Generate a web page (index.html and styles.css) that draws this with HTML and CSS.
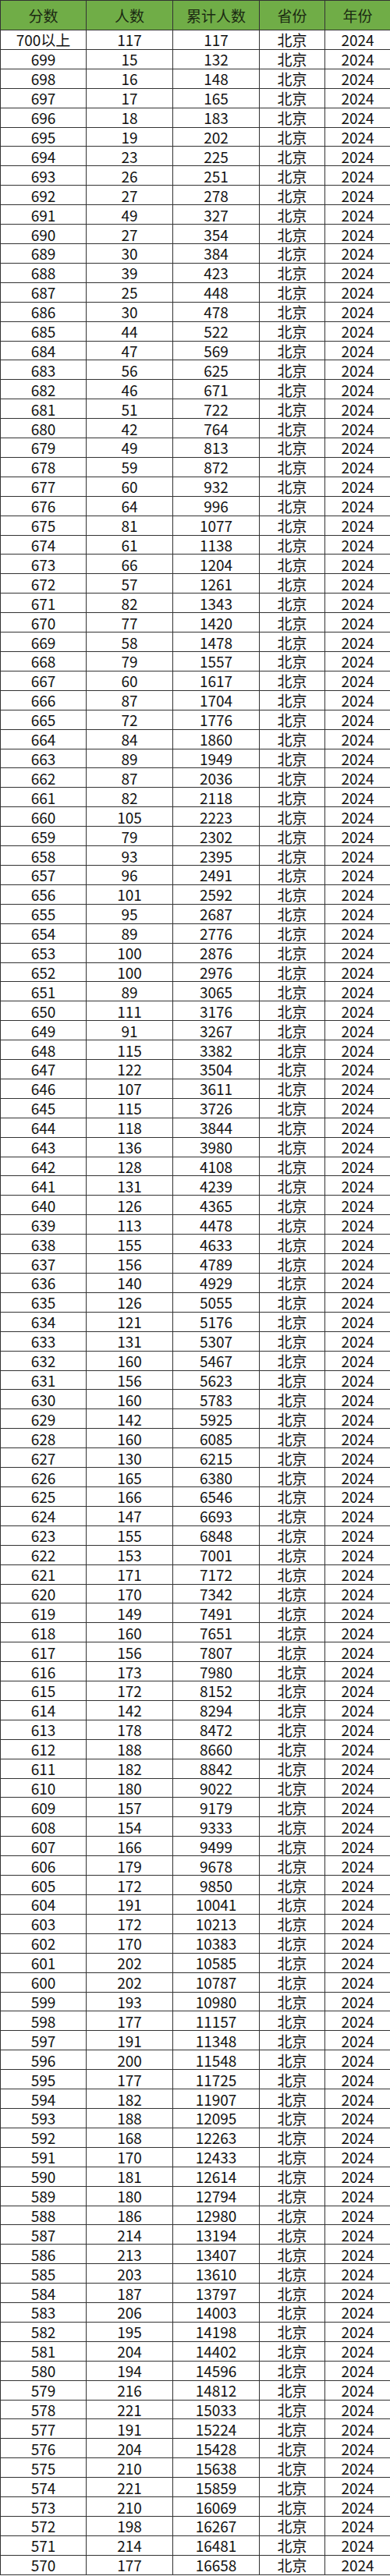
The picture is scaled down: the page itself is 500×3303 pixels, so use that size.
FILE: index.html
```html
<!DOCTYPE html>
<html lang="zh-CN">
<head>
<meta charset="utf-8">
<title>北京 2024 分数段</title>
<link rel="stylesheet" href="styles.css">
</head>
<body>
<table class="score-table">
<colgroup>
<col class="c-score"><col class="c-num"><col class="c-sum"><col class="c-prov"><col class="c-year">
</colgroup>
<thead>
<tr class="head"><th>分数</th><th>人数</th><th>累计人数</th><th>省份</th><th>年份</th></tr>
</thead>
<tbody>
<tr><td>700以上</td><td>117</td><td>117</td><td>北京</td><td>2024</td></tr>
<tr><td>699</td><td>15</td><td>132</td><td>北京</td><td>2024</td></tr>
<tr><td>698</td><td>16</td><td>148</td><td>北京</td><td>2024</td></tr>
<tr><td>697</td><td>17</td><td>165</td><td>北京</td><td>2024</td></tr>
<tr><td>696</td><td>18</td><td>183</td><td>北京</td><td>2024</td></tr>
<tr><td>695</td><td>19</td><td>202</td><td>北京</td><td>2024</td></tr>
<tr><td>694</td><td>23</td><td>225</td><td>北京</td><td>2024</td></tr>
<tr><td>693</td><td>26</td><td>251</td><td>北京</td><td>2024</td></tr>
<tr><td>692</td><td>27</td><td>278</td><td>北京</td><td>2024</td></tr>
<tr><td>691</td><td>49</td><td>327</td><td>北京</td><td>2024</td></tr>
<tr><td>690</td><td>27</td><td>354</td><td>北京</td><td>2024</td></tr>
<tr><td>689</td><td>30</td><td>384</td><td>北京</td><td>2024</td></tr>
<tr><td>688</td><td>39</td><td>423</td><td>北京</td><td>2024</td></tr>
<tr><td>687</td><td>25</td><td>448</td><td>北京</td><td>2024</td></tr>
<tr><td>686</td><td>30</td><td>478</td><td>北京</td><td>2024</td></tr>
<tr><td>685</td><td>44</td><td>522</td><td>北京</td><td>2024</td></tr>
<tr><td>684</td><td>47</td><td>569</td><td>北京</td><td>2024</td></tr>
<tr><td>683</td><td>56</td><td>625</td><td>北京</td><td>2024</td></tr>
<tr><td>682</td><td>46</td><td>671</td><td>北京</td><td>2024</td></tr>
<tr><td>681</td><td>51</td><td>722</td><td>北京</td><td>2024</td></tr>
<tr><td>680</td><td>42</td><td>764</td><td>北京</td><td>2024</td></tr>
<tr><td>679</td><td>49</td><td>813</td><td>北京</td><td>2024</td></tr>
<tr><td>678</td><td>59</td><td>872</td><td>北京</td><td>2024</td></tr>
<tr><td>677</td><td>60</td><td>932</td><td>北京</td><td>2024</td></tr>
<tr><td>676</td><td>64</td><td>996</td><td>北京</td><td>2024</td></tr>
<tr><td>675</td><td>81</td><td>1077</td><td>北京</td><td>2024</td></tr>
<tr><td>674</td><td>61</td><td>1138</td><td>北京</td><td>2024</td></tr>
<tr><td>673</td><td>66</td><td>1204</td><td>北京</td><td>2024</td></tr>
<tr><td>672</td><td>57</td><td>1261</td><td>北京</td><td>2024</td></tr>
<tr><td>671</td><td>82</td><td>1343</td><td>北京</td><td>2024</td></tr>
<tr><td>670</td><td>77</td><td>1420</td><td>北京</td><td>2024</td></tr>
<tr><td>669</td><td>58</td><td>1478</td><td>北京</td><td>2024</td></tr>
<tr><td>668</td><td>79</td><td>1557</td><td>北京</td><td>2024</td></tr>
<tr><td>667</td><td>60</td><td>1617</td><td>北京</td><td>2024</td></tr>
<tr><td>666</td><td>87</td><td>1704</td><td>北京</td><td>2024</td></tr>
<tr><td>665</td><td>72</td><td>1776</td><td>北京</td><td>2024</td></tr>
<tr><td>664</td><td>84</td><td>1860</td><td>北京</td><td>2024</td></tr>
<tr><td>663</td><td>89</td><td>1949</td><td>北京</td><td>2024</td></tr>
<tr><td>662</td><td>87</td><td>2036</td><td>北京</td><td>2024</td></tr>
<tr><td>661</td><td>82</td><td>2118</td><td>北京</td><td>2024</td></tr>
<tr><td>660</td><td>105</td><td>2223</td><td>北京</td><td>2024</td></tr>
<tr><td>659</td><td>79</td><td>2302</td><td>北京</td><td>2024</td></tr>
<tr><td>658</td><td>93</td><td>2395</td><td>北京</td><td>2024</td></tr>
<tr><td>657</td><td>96</td><td>2491</td><td>北京</td><td>2024</td></tr>
<tr><td>656</td><td>101</td><td>2592</td><td>北京</td><td>2024</td></tr>
<tr><td>655</td><td>95</td><td>2687</td><td>北京</td><td>2024</td></tr>
<tr><td>654</td><td>89</td><td>2776</td><td>北京</td><td>2024</td></tr>
<tr><td>653</td><td>100</td><td>2876</td><td>北京</td><td>2024</td></tr>
<tr><td>652</td><td>100</td><td>2976</td><td>北京</td><td>2024</td></tr>
<tr><td>651</td><td>89</td><td>3065</td><td>北京</td><td>2024</td></tr>
<tr><td>650</td><td>111</td><td>3176</td><td>北京</td><td>2024</td></tr>
<tr><td>649</td><td>91</td><td>3267</td><td>北京</td><td>2024</td></tr>
<tr><td>648</td><td>115</td><td>3382</td><td>北京</td><td>2024</td></tr>
<tr><td>647</td><td>122</td><td>3504</td><td>北京</td><td>2024</td></tr>
<tr><td>646</td><td>107</td><td>3611</td><td>北京</td><td>2024</td></tr>
<tr><td>645</td><td>115</td><td>3726</td><td>北京</td><td>2024</td></tr>
<tr><td>644</td><td>118</td><td>3844</td><td>北京</td><td>2024</td></tr>
<tr><td>643</td><td>136</td><td>3980</td><td>北京</td><td>2024</td></tr>
<tr><td>642</td><td>128</td><td>4108</td><td>北京</td><td>2024</td></tr>
<tr><td>641</td><td>131</td><td>4239</td><td>北京</td><td>2024</td></tr>
<tr><td>640</td><td>126</td><td>4365</td><td>北京</td><td>2024</td></tr>
<tr><td>639</td><td>113</td><td>4478</td><td>北京</td><td>2024</td></tr>
<tr><td>638</td><td>155</td><td>4633</td><td>北京</td><td>2024</td></tr>
<tr><td>637</td><td>156</td><td>4789</td><td>北京</td><td>2024</td></tr>
<tr><td>636</td><td>140</td><td>4929</td><td>北京</td><td>2024</td></tr>
<tr><td>635</td><td>126</td><td>5055</td><td>北京</td><td>2024</td></tr>
<tr><td>634</td><td>121</td><td>5176</td><td>北京</td><td>2024</td></tr>
<tr><td>633</td><td>131</td><td>5307</td><td>北京</td><td>2024</td></tr>
<tr><td>632</td><td>160</td><td>5467</td><td>北京</td><td>2024</td></tr>
<tr><td>631</td><td>156</td><td>5623</td><td>北京</td><td>2024</td></tr>
<tr><td>630</td><td>160</td><td>5783</td><td>北京</td><td>2024</td></tr>
<tr><td>629</td><td>142</td><td>5925</td><td>北京</td><td>2024</td></tr>
<tr><td>628</td><td>160</td><td>6085</td><td>北京</td><td>2024</td></tr>
<tr><td>627</td><td>130</td><td>6215</td><td>北京</td><td>2024</td></tr>
<tr><td>626</td><td>165</td><td>6380</td><td>北京</td><td>2024</td></tr>
<tr><td>625</td><td>166</td><td>6546</td><td>北京</td><td>2024</td></tr>
<tr><td>624</td><td>147</td><td>6693</td><td>北京</td><td>2024</td></tr>
<tr><td>623</td><td>155</td><td>6848</td><td>北京</td><td>2024</td></tr>
<tr><td>622</td><td>153</td><td>7001</td><td>北京</td><td>2024</td></tr>
<tr><td>621</td><td>171</td><td>7172</td><td>北京</td><td>2024</td></tr>
<tr><td>620</td><td>170</td><td>7342</td><td>北京</td><td>2024</td></tr>
<tr><td>619</td><td>149</td><td>7491</td><td>北京</td><td>2024</td></tr>
<tr><td>618</td><td>160</td><td>7651</td><td>北京</td><td>2024</td></tr>
<tr><td>617</td><td>156</td><td>7807</td><td>北京</td><td>2024</td></tr>
<tr><td>616</td><td>173</td><td>7980</td><td>北京</td><td>2024</td></tr>
<tr><td>615</td><td>172</td><td>8152</td><td>北京</td><td>2024</td></tr>
<tr><td>614</td><td>142</td><td>8294</td><td>北京</td><td>2024</td></tr>
<tr><td>613</td><td>178</td><td>8472</td><td>北京</td><td>2024</td></tr>
<tr><td>612</td><td>188</td><td>8660</td><td>北京</td><td>2024</td></tr>
<tr><td>611</td><td>182</td><td>8842</td><td>北京</td><td>2024</td></tr>
<tr><td>610</td><td>180</td><td>9022</td><td>北京</td><td>2024</td></tr>
<tr><td>609</td><td>157</td><td>9179</td><td>北京</td><td>2024</td></tr>
<tr><td>608</td><td>154</td><td>9333</td><td>北京</td><td>2024</td></tr>
<tr><td>607</td><td>166</td><td>9499</td><td>北京</td><td>2024</td></tr>
<tr><td>606</td><td>179</td><td>9678</td><td>北京</td><td>2024</td></tr>
<tr><td>605</td><td>172</td><td>9850</td><td>北京</td><td>2024</td></tr>
<tr><td>604</td><td>191</td><td>10041</td><td>北京</td><td>2024</td></tr>
<tr><td>603</td><td>172</td><td>10213</td><td>北京</td><td>2024</td></tr>
<tr><td>602</td><td>170</td><td>10383</td><td>北京</td><td>2024</td></tr>
<tr><td>601</td><td>202</td><td>10585</td><td>北京</td><td>2024</td></tr>
<tr><td>600</td><td>202</td><td>10787</td><td>北京</td><td>2024</td></tr>
<tr><td>599</td><td>193</td><td>10980</td><td>北京</td><td>2024</td></tr>
<tr><td>598</td><td>177</td><td>11157</td><td>北京</td><td>2024</td></tr>
<tr><td>597</td><td>191</td><td>11348</td><td>北京</td><td>2024</td></tr>
<tr><td>596</td><td>200</td><td>11548</td><td>北京</td><td>2024</td></tr>
<tr><td>595</td><td>177</td><td>11725</td><td>北京</td><td>2024</td></tr>
<tr><td>594</td><td>182</td><td>11907</td><td>北京</td><td>2024</td></tr>
<tr><td>593</td><td>188</td><td>12095</td><td>北京</td><td>2024</td></tr>
<tr><td>592</td><td>168</td><td>12263</td><td>北京</td><td>2024</td></tr>
<tr><td>591</td><td>170</td><td>12433</td><td>北京</td><td>2024</td></tr>
<tr><td>590</td><td>181</td><td>12614</td><td>北京</td><td>2024</td></tr>
<tr><td>589</td><td>180</td><td>12794</td><td>北京</td><td>2024</td></tr>
<tr><td>588</td><td>186</td><td>12980</td><td>北京</td><td>2024</td></tr>
<tr><td>587</td><td>214</td><td>13194</td><td>北京</td><td>2024</td></tr>
<tr><td>586</td><td>213</td><td>13407</td><td>北京</td><td>2024</td></tr>
<tr><td>585</td><td>203</td><td>13610</td><td>北京</td><td>2024</td></tr>
<tr><td>584</td><td>187</td><td>13797</td><td>北京</td><td>2024</td></tr>
<tr><td>583</td><td>206</td><td>14003</td><td>北京</td><td>2024</td></tr>
<tr><td>582</td><td>195</td><td>14198</td><td>北京</td><td>2024</td></tr>
<tr><td>581</td><td>204</td><td>14402</td><td>北京</td><td>2024</td></tr>
<tr><td>580</td><td>194</td><td>14596</td><td>北京</td><td>2024</td></tr>
<tr><td>579</td><td>216</td><td>14812</td><td>北京</td><td>2024</td></tr>
<tr><td>578</td><td>221</td><td>15033</td><td>北京</td><td>2024</td></tr>
<tr><td>577</td><td>191</td><td>15224</td><td>北京</td><td>2024</td></tr>
<tr><td>576</td><td>204</td><td>15428</td><td>北京</td><td>2024</td></tr>
<tr><td>575</td><td>210</td><td>15638</td><td>北京</td><td>2024</td></tr>
<tr><td>574</td><td>221</td><td>15859</td><td>北京</td><td>2024</td></tr>
<tr><td>573</td><td>210</td><td>16069</td><td>北京</td><td>2024</td></tr>
<tr><td>572</td><td>198</td><td>16267</td><td>北京</td><td>2024</td></tr>
<tr><td>571</td><td>214</td><td>16481</td><td>北京</td><td>2024</td></tr>
<tr><td>570</td><td>177</td><td>16658</td><td>北京</td><td>2024</td></tr>
</tbody>
</table>
</body>
</html>
```

FILE: styles.css
```css
html, body {
  margin: 0;
  padding: 0;
  background: #ffffff;
}

.score-table {
  width: 500px;
  border-collapse: collapse;
  table-layout: fixed;
  font-family: "Noto Sans CJK SC", "Noto Sans", sans-serif;
  font-size: 19px;
  color: #111111;
}

.c-score { width: 110px; }
.c-num { width: 111px; }
.c-sum { width: 111px; }
.c-prov { width: 84px; }
.c-year { width: 84px; }

.score-table th,
.score-table td {
  border: 1px solid #333333;
  padding: 0;
  text-align: center;
  vertical-align: middle;
  line-height: 1;
  white-space: nowrap;
  overflow: hidden;
}

.score-table th {
  font-weight: normal;
  background: #70ad47;
  color: #1b2a12;
}

.score-table .head {
  height: 38px;
}

.score-table tbody tr {
  height: 24.92px;
}
```
